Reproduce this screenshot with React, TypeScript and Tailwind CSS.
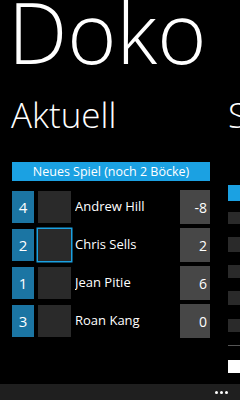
import React from 'react';

interface Player {
  pos: number;
  name: string;
  score: number;
  selected?: boolean;
}

const players: Player[] = [
  { pos: 4, name: 'Andrew Hill', score: -8 },
  { pos: 2, name: 'Chris Sells', score: 2, selected: true },
  { pos: 1, name: 'Jean Pitie', score: 6 },
  { pos: 3, name: 'Roan Kang', score: 0 },
];

const PlayerRow: React.FC<{ player: Player }> = ({ player }) => (
  <div className="flex items-center h-[34px]">
    <div className="w-[22px] h-[32px] bg-[#1b75a3] flex items-center justify-center text-white text-[15px]">
      {player.pos}
    </div>
    <div
      className={`ml-[4px] w-[33px] h-[32px] bg-[#2a2a2a] ${
        player.selected ? 'ring-[1.5px] ring-[#1ba1e2]' : ''
      }`}
    />
    <div className="ml-[4px] flex-1 text-white text-[13px] truncate">{player.name}</div>
    <div className="w-[30px] h-[34px] bg-[#474747] flex items-center justify-end pr-[3px] text-white text-[14px]">
      {player.score}
    </div>
  </div>
);

export default function App() {
  return (
    <div
      className="w-[240px] h-[400px] bg-black overflow-hidden flex flex-col text-white"
      style={{ fontFamily: '"Open Sans", "Noto Sans", sans-serif' }}
    >
      <div className="pl-[8px] h-[72px] text-[84px] leading-[64px] font-light whitespace-nowrap">
        Doko
      </div>

      <div className="flex flex-1 mt-[25px] min-h-0">
        {/* current pivot */}
        <div className="ml-[12px] w-[198px] shrink-0 flex flex-col">
          <div className="text-[35px] leading-[36px] font-light -ml-[1px]">Aktuell</div>
          <button className="mt-[29px] h-[19px] bg-[#1ba1e2] text-white text-[12.5px] leading-[19px] text-center whitespace-nowrap">
            Neues Spiel (noch 2 Böcke)
          </button>
          <div className="mt-[9px] flex flex-col gap-[4px]">
            {players.map((p) => (
              <PlayerRow key={p.name} player={p} />
            ))}
          </div>
        </div>

        {/* next pivot peeking in */}
        <div className="ml-[18px] flex-1 flex flex-col">
          <div className="text-[35px] leading-[36px] font-light whitespace-nowrap">S</div>
          <div className="mt-[52px] h-[16px] bg-[#1ba1e2] shrink-0" />
          <div className="mt-[11px] h-[12px] bg-[#2a2a2a] shrink-0" />
          <div className="mt-[13px] h-[15px] bg-[#2a2a2a] shrink-0" />
          <div className="mt-[13px] h-[13px] bg-[#2a2a2a] shrink-0" />
          <div className="mt-[13px] h-[14px] bg-[#2a2a2a] shrink-0" />
          <div className="mt-[14px] h-[13px] bg-[#2a2a2a] shrink-0" />
          <div className="mt-[13px] h-px bg-[#555] shrink-0" />
          <div className="mt-[14px] h-[13px] bg-white shrink-0" />
        </div>
      </div>

      {/* app bar */}
      <div className="h-[16px] bg-[#1f1f1f] flex items-center justify-end pr-[12px] gap-[2px] shrink-0">
        <span className="w-[3px] h-[3px] rounded-full bg-white" />
        <span className="w-[3px] h-[3px] rounded-full bg-white" />
        <span className="w-[3px] h-[3px] rounded-full bg-white" />
      </div>
    </div>
  );
}
